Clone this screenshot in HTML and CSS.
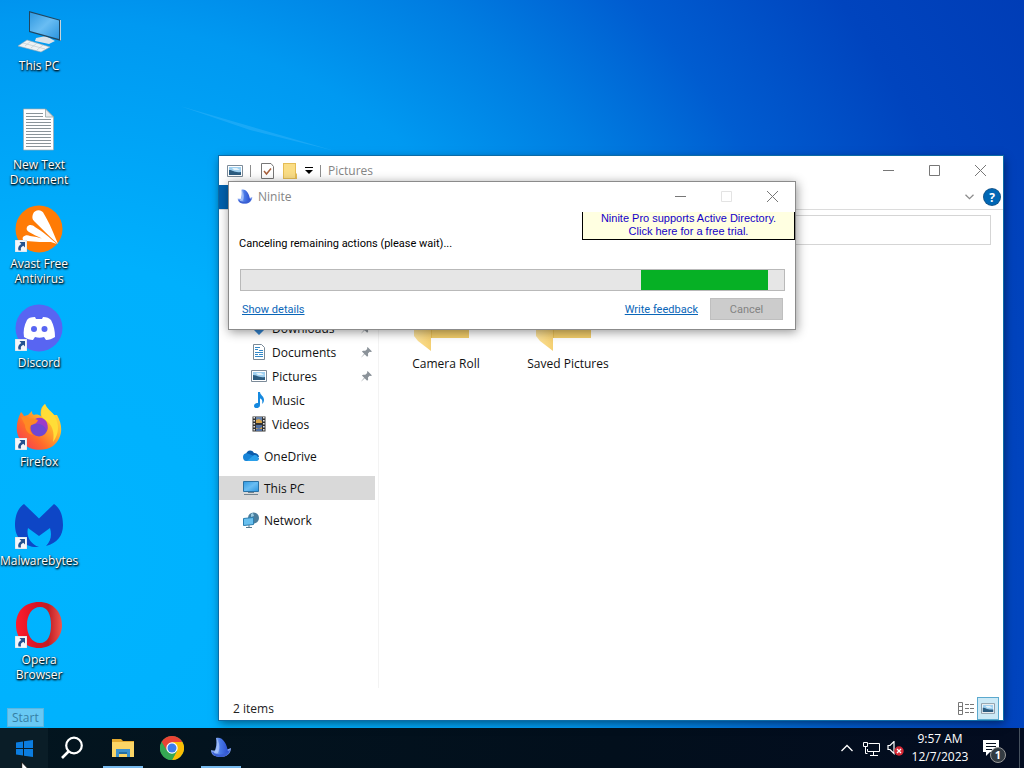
FILE: index.html
```html
<!DOCTYPE html>
<html lang="en">
<head>
<meta charset="utf-8">
<title>Desktop</title>
<link rel="stylesheet" href="styles.css">
</head>
<body>
<svg class="defs" aria-hidden="true">
  <defs>
    <linearGradient id="screen" x1="0" y1="0" x2="1" y2="1"><stop offset="0" stop-color="#2f98e0"/><stop offset=".5" stop-color="#69bdf3"/><stop offset="1" stop-color="#2b95df"/></linearGradient>
    <linearGradient id="fold" x1="0" y1="0" x2="1" y2="0"><stop offset="0" stop-color="#fce29a"/><stop offset="1" stop-color="#f5d072"/></linearGradient>
    <linearGradient id="fox" x1="1" y1="0" x2="0" y2="1"><stop offset="0" stop-color="#fff04a"/><stop offset=".35" stop-color="#ffb52e"/><stop offset=".65" stop-color="#ff6a2b"/><stop offset="1" stop-color="#f22c63"/></linearGradient>
    <linearGradient id="opera" x1="0" y1="0" x2="1" y2="0"><stop offset="0" stop-color="#ff1c2d"/><stop offset=".45" stop-color="#d71425"/><stop offset=".7" stop-color="#c01d24"/><stop offset="1" stop-color="#f1564c"/></linearGradient>
    <linearGradient id="sail" x1="0" y1="0" x2="1" y2="0"><stop offset="0" stop-color="#a9c6fa"/><stop offset=".45" stop-color="#4878e6"/><stop offset="1" stop-color="#2c50cf"/></linearGradient>
    <symbol id="shortcut" viewBox="0 0 12 12"><path fill="#f4f6fa" stroke="#b9c4d0" stroke-width=".5" d="M0 0h12v12H0z"/><path fill="#24518f" d="M4.500 2H10v5.500L8.300 5.800C6 7 5.500 8 6 10.500H3.500C2.500 7.500 3.800 5.500 6.300 3.900z"/></symbol>
    <symbol id="picture" viewBox="0 0 16 12"><path fill="#fff" stroke="#7c8b99" d="M.5.5h15v11H.5z"/><path fill="#9fd0f0" d="M2 2h12v8H2z"/><path fill="#e4f2fa" d="M5 3h5l3 2H7z"/><path fill="#2c5c80" d="M2 5c4 0 5 3 12 2v3H2z"/></symbol>
    <symbol id="pin" viewBox="0 0 12 12"><path fill="#8b9299" d="M7.200 0 12 4.800l-1.400.6-1.200-.3-1.800 1.900.2 2.500-1.100 1L4 7.900.3 11.500 0 12l.5-1L3.500 7.400 1 4.900 2.200 4l2.500.2 2.100-1.900-.2-1.300z"/></symbol>
    <symbol id="ninite" viewBox="0 0 22 22"><path fill="#7f9ff0" d="M1 13c3 1 14 1 20-2 0 6-5 9-10 9-6 0-10-2-10-7z"/><path fill="#3a5fd2" d="M2 15c5 2 13 1 18-2-1 5-5 7-9 7s-8-1-9-5z"/><path fill="url(#sail)" d="M6 1c6-2 11 5 12 14-5 3-10 3-14 1 2-4 3-9 2-15z"/><path fill="#bdd4ff" opacity=".6" d="M7 2c3 5 3 10 1 14l-3-.5C7 11 7.500 7 7 2z"/></symbol>
    <symbol id="folder" viewBox="0 0 96 96"><path fill="#e8bf55" d="M16 18h24l4 6h27v58H22z"/><path fill="#f1cc6a" d="M34 26h37v56H34z"/><path fill="url(#fold)" d="M16 18l17 11v66L20 85l-4-5z"/></symbol>
  </defs>
</svg>
<main class="desktop">
  <svg class="beam" aria-hidden="true"><path d="M180 106 335 151 250 130z"/></svg>
  <nav class="shortcuts" aria-label="Desktop icons">
    <a class="shortcut" href="#pc">
      <svg class="big" viewBox="0 0 48 48"><path fill="#d9e3ea" d="M21 31l10-2 9 5-6 3-14-3z"/><path fill="#eef2f4" stroke="#9aa8b1" stroke-width=".6" d="M12 33l23 7-9 5-23-6z"/><path stroke="#c0cad0" stroke-width=".7" d="M8 36l22 6M16 34l-6 5M22 36l-6 5M28 38l-6 5"/><path fill="#204660" d="M14 4l32 9v21l-32-9z"/><path fill="url(#screen)" d="M15 5.500l29 8v18.500l-29-8z"/><path stroke="#c5d4dc" d="M45.500 13v20.500" fill="none"/></svg>
      <span>This PC</span></a>
    <a class="shortcut" href="#doc">
      <svg class="big" viewBox="0 0 48 48"><path fill="#fff" stroke="#a2a9ad" stroke-width=".7" d="M8.500 3h22l8 8v33h-30z"/><path fill="#e7ebed" stroke="#899" stroke-width=".7" d="M30.500 3v8h8z"/><path stroke="#8b9499" d="M11 7.500h17M11 10.500h17M11 13.500h25M11 16.500h25M11 19.500h25M11 22.500h25M11 25.500h25M11 28.500h25M11 31.500h25M11 34.500h25M11 37.500h25M11 40.500h25"/></svg>
      <span>New Text Document</span></a>
    <a class="shortcut" href="#avast">
      <svg class="big" viewBox="0 0 48 48"><circle cx="24" cy="24" r="23.500" fill="#ff7b05"/><path fill="#fff" d="M18 9c2-5 9-5 11 0 5 8 10 20 14 30C35 32 26 23 19 16c-2-2-2-4-1-7zM12 22c2-3 6-2 8 0 7 4 15 11 22 17-10-3-21-8-28-12-2-1-3-3-2-5zM8 32c2-2 5-2 7-1 9 1 17 4 23 6-9 0-18 0-27-1-3 0-4-2-3-4z"/><use href="#shortcut" x="0" y="35" width="12" height="12"/></svg>
      <span>Avast Free Antivirus</span></a>
    <a class="shortcut" href="#discord">
      <svg class="big" viewBox="0 0 48 48"><circle cx="24" cy="24" r="23.500" fill="#5865f2"/><path fill="#fff" d="M20 13c-4 0-7 1-8 3-3 6-4 11-3 17 3 2 6 3 9 3l2-3c3 1 6 1 9 0l2 3c3 0 6-1 9-3 0-6-1-11-4-17-2-2-4-3-8-3l-1 2h-6z"/><circle cx="19" cy="25" r="3" fill="#5865f2"/><circle cx="29.500" cy="25" r="3" fill="#5865f2"/><use href="#shortcut" x="0" y="35" width="12" height="12"/></svg>
      <span>Discord</span></a>
    <a class="shortcut" href="#firefox">
      <svg class="big" viewBox="0 0 48 48"><path fill="url(#fox)" d="M6 9c1 1 2 2 3 4l4-1 4-4c0 2 0 3 2 4 3-1 5 0 7 1-1-5 0-9 4-12 2 5 5 7 9 11l3 0c7 12 5 24-4 31-9 6-23 5-30-3C-1 31 1 19 6 9z"/><path fill="#ffdd37" d="M30 1c2 5 6 7 9 11 6 9 5 19-1 27 2-10-1-18-8-22-6-4-4-11 0-16z"/><circle cx="24" cy="25" r="8.500" fill="#7047d2"/><path fill="#9b3cc9" d="M20 16c8-4 15 3 12 12-2-5-6-8-12-7z"/><path fill="#ff8a24" d="M6 14c5 0 6 0 9 2 3-1 5 0 8 1-1 4-5 4-8 6-1 3 0 6 3 9-5-1-8-5-8-10z"/><use href="#shortcut" x="0" y="35" width="12" height="12"/></svg>
      <span>Firefox</span></a>
    <a class="shortcut" href="#malwarebytes">
      <svg class="big" viewBox="0 0 48 48"><path fill="#0e46c6" d="M9 2 24 16.500 39 2c7 5 9 13 9 21 0 11-6 18-17 21 5-5 6-11 4-18L24 34 13 26c-2 8 2 16 11 19C9 46 0 36 0 23 0 15 2 7 9 2z"/><use href="#shortcut" x="0" y="35" width="12" height="12"/></svg>
      <span>Malwarebytes</span></a>
    <a class="shortcut" href="#opera">
      <svg class="big" viewBox="0 0 48 48"><path fill="url(#opera)" fill-rule="evenodd" d="M24 1C38 1 47 11 47 24S37 47 24 47 1 38 1 24 10 1 24 1zm1 5C17 6 12 14 12 24s5 18 13 18 11-8 11-18S33 6 25 6z"/><use href="#shortcut" x="0" y="35" width="12" height="12"/></svg>
      <span>Opera Browser</span></a>
  </nav>

  <section class="explorer" aria-label="Pictures">
    <header class="titlebar">
      <svg width="16" height="12"><use href="#picture"/></svg>
      <i class="sep first"></i>
      <svg class="check" width="13" height="16" viewBox="0 0 13 16"><path fill="#fff" stroke="#777" d="M.5.5H10l2.500 3v12H.5z"/><path fill="none" stroke="#a8613d" stroke-width="1.500" d="m3 8 2.500 3L10 5.500"/></svg>
      <svg class="mini" width="14" height="16" viewBox="0 0 14 16"><path fill="#e5bd55" d="M0 0h13v10l1 1v5H0z"/><path fill="#fadd85" d="M1 1h11v14H1z"/></svg>
      <svg width="8" height="7" viewBox="0 0 8 7"><path d="M0 0h8v1H0zM0 3h8L4 7z"/></svg>
      <i class="sep"></i>
      <h1>Pictures</h1>
      <div class="controls">
        <button aria-label="Minimize"><svg viewBox="0 0 11 11"><path d="M0 5.500h11"/></svg></button>
        <button aria-label="Maximize"><svg viewBox="0 0 11 11"><path d="M.5.5h10v10H.5z"/></svg></button>
        <button aria-label="Close"><svg viewBox="0 0 11 11"><path d="m0 0 11 11M11 0 0 11"/></svg></button>
      </div>
    </header>
    <div class="ribbon">
      <button class="file" aria-label="File"></button>
      <button class="expand" aria-label="Expand the ribbon"><svg width="9" height="6" viewBox="0 0 9 6"><path fill="none" stroke="#8c8c8c" stroke-width="1.300" d="m.5.7 4 4 4-4"/></svg></button>
      <button class="help" aria-label="Help">?</button>
    </div>
    <div class="address"><input type="text" aria-label="Search Pictures"></div>
    <div class="panes">
      <nav class="tree" aria-label="Folders">
        <a class="sub" href="#downloads"><svg viewBox="0 0 16 16"><path fill="#3484cf" d="M5 1h6v7h4l-7 7-7-7h4z"/></svg>Downloads<svg class="pin"><use href="#pin"/></svg></a>
        <a class="sub" href="#documents"><svg viewBox="0 0 16 16"><path fill="#fff" stroke="#788997" d="M2.500.5h8l3 3v12h-11z"/><path stroke="#3389c8" d="M4 5.500h3M4 3.500h5M8 6.500h4M4 8.500h8M4 10.500h3M8 10.500h4M4 12.500h8"/></svg>Documents<svg class="pin"><use href="#pin"/></svg></a>
        <a class="sub" href="#pictures"><svg viewBox="0 0 16 16"><use href="#picture" y="2" width="16" height="12"/></svg>Pictures<svg class="pin"><use href="#pin"/></svg></a>
        <a class="sub" href="#music"><svg viewBox="0 0 16 16"><path fill="#1689df" d="M7 0h2c0 3 4 4 4 8 0 2-1 3-2 4 1-4-.5-5-2-5.500V13c0 4-6 4-6 1 0-2 2-3.500 4-3z"/></svg>Music</a>
        <a class="sub" href="#videos"><svg viewBox="0 0 16 16"><path fill="#333" d="M1.500.5h13v15h-13z"/><path fill="#6985ad" d="M5 1h6v6H5z"/><path fill="#5270a0" d="M5 9h6v6H5z"/><path fill="#d8a54a" d="M5 4l3-1 3 2v2H5zM5 12l3 1 3-2v2H5z"/><path stroke="#eee" stroke-width="1.500" stroke-dasharray="1.500 1.500" d="M3.200 1v14M12.800 1v14"/></svg>Videos</a>
        <a class="root" href="#onedrive"><svg viewBox="0 0 16 16"><path fill="#0b5cac" d="M3 7c0-5 6-6 8-2 3 0 5 2 5 4l-6 2z"/><path fill="#1784d8" d="M0 9c0-3 3-5 6-3l10 4c0 2-1 3-3 3H3c-2 0-3-2-3-4z"/><path fill="#2aa0ea" d="M4 13l7-6c4-1 6 5 2 6z"/></svg>OneDrive</a>
        <a class="root current" href="#thispc"><svg viewBox="0 0 16 16"><path fill="url(#screen)" stroke="#2a71a4" d="M.5 1.500h15v10H.5z"/><path stroke="#71838f" d="M1 14.500h14M5 12.500h6"/></svg>This PC</a>
        <a class="root" href="#network"><svg viewBox="0 0 16 16"><circle cx="10.500" cy="6" r="5.500" fill="#4a7d9c"/><path fill="#9acbe2" d="M8 2l2-1 1 3-3 1z"/><path fill="#69c0ef" stroke="#2c7fb1" d="m.5 6.500 10-1v7l-10 1z"/><path stroke="#56798d" d="M3 15.500h6M6 13v2"/></svg>Network</a>
      </nav>
      <div class="files">
        <a href="#camera"><svg width="96" height="96"><use href="#folder"/></svg><span>Camera Roll</span></a>
        <a href="#saved"><svg width="96" height="96"><use href="#folder"/></svg><span>Saved Pictures</span></a>
      </div>
    </div>
    <footer class="status">
      <span>2 items</span>
      <button aria-label="Details view"><svg width="16" height="13" viewBox="0 0 16 13"><path fill="none" stroke="#777" d="M.5.5h4v12h-4zM.5 4.500h4M.5 8.500h4"/><path stroke="#777" stroke-dasharray="4 1" d="M7 2.500h9M7 6.500h9M7 10.500h9"/></svg></button>
      <button class="on" aria-label="Large icons view"><svg width="14" height="11"><use href="#picture"/></svg></button>
    </footer>
  </section>

  <section class="dialog" role="dialog" aria-label="Ninite">
    <header class="titlebar">
      <svg width="16" height="16"><use href="#ninite"/></svg>
      <h2>Ninite</h2>
      <div class="controls">
        <button aria-label="Minimize"><svg viewBox="0 0 11 11"><path d="M0 5.500h11"/></svg></button>
        <button aria-label="Maximize" disabled><svg viewBox="0 0 11 11"><path d="M.5.5h10v10H.5z"/></svg></button>
        <button aria-label="Close"><svg viewBox="0 0 11 11"><path d="m0 0 11 11M11 0 0 11"/></svg></button>
      </div>
    </header>
    <div class="message">
      <p id="job">Canceling remaining actions (please wait)...</p>
      <a href="#pro">Ninite Pro supports Active Directory.<br>Click here for a free trial.</a>
    </div>
    <div class="progress" role="progressbar" aria-labelledby="job"><div class="chunk"></div></div>
    <div class="actions">
      <a href="#details">Show details</a>
      <a class="feedback" href="#feedback">Write feedback</a>
      <button disabled>Cancel</button>
    </div>
  </section>
  <div class="tooltip" role="tooltip">Start</div>
</main>

<footer class="taskbar">
  <button class="start" aria-label="Start"><svg width="17" height="17" viewBox="0 0 17 17"><path fill="#0b7de0" d="m0 2.500 7-1V8H0zM8 1.300 17 0v8H8zM0 9h7v6.500l-7-1zM8 9h9v8l-9-1.300z"/></svg></button>
  <button aria-label="Search"><svg width="24" height="24" viewBox="0 0 24 24"><circle cx="14" cy="9.500" r="7.800" fill="none" stroke="#fff" stroke-width="2.200"/><path stroke="#fff" stroke-width="2.600" d="m9 15-7 7"/></svg></button>
  <div class="apps">
    <button class="open" aria-label="File Explorer"><svg width="22" height="18" viewBox="0 0 22 18"><path fill="#e3a92f" d="M0 0h9l2 2h11v16H0z"/><path fill="#fbd566" d="M0 3h22v15H0z"/><path fill="#3d91cd" d="M4 10h14v8h-3v-4H7v4H4z"/><path fill="#256fa4" d="M7 13h8v2H7z"/></svg></button>
    <button aria-label="Google Chrome"><svg width="24" height="24" viewBox="0 0 24 24"><circle cx="12" cy="12" r="12" fill="#35a853"/><path fill="#e94335" d="M1.600 6A12 12 0 0 1 22.400 6L12 7 7 15z"/><path fill="#fbbd05" d="M22.400 6A12 12 0 0 1 12 24l5-9-5-9z"/><path fill="#35a853" d="M1.600 6A12 12 0 0 0 12 24l4.800-9H7z"/><circle cx="12" cy="12" r="5.700" fill="#fff"/><circle cx="12" cy="12" r="4.500" fill="#3b7ded"/></svg></button>
    <button class="open" aria-label="Ninite"><svg width="22" height="22"><use href="#ninite"/></svg></button>
  </div>
  <div class="tray">
    <button aria-label="Show hidden icons"><svg width="12" height="8" viewBox="0 0 12 8"><path fill="none" stroke="#fff" stroke-width="1.300" d="m.5 7 5.500-5.500L11.500 7"/></svg></button>
    <button aria-label="Network"><svg width="17" height="15" viewBox="0 0 17 15"><path fill="none" stroke="#fff" d="M5.500 2.500h11v8h-12V8M10.500 11v3M7 14.500h8M.5 1.500h4v4h-4zM2.500 6v6.500h2"/></svg></button>
    <button aria-label="Volume muted"><svg width="17" height="15" viewBox="0 0 17 15"><path fill="none" stroke="#fff" stroke-width="1.200" d="M1 4.500h2l4-4v12l-4-4H1z"/><circle cx="12" cy="10" r="4.700" fill="#d62835"/><path stroke="#fff" stroke-width="1.300" d="m10 8 4 4m0-4-4 4"/></svg></button>
    <time datetime="2023-12-07T09:57">9:57 AM<br>12/7/2023</time>
    <button class="notes" aria-label="Notifications"><svg width="16" height="16" viewBox="0 0 16 16"><path fill="#fff" d="M0 0h16v12H7l-4 4v-4H0z"/><path stroke="#07101f" d="M3 3.500h10M3 6.500h10M3 9.500h6"/></svg><b>1</b></button>
    <i class="peek"></i>
  </div>
</footer>
<svg class="cursor" width="14" height="20" viewBox="0 0 14 20" aria-hidden="true"><path fill="#fff" stroke="#111" d="M.7 1v16l4-3.500 2.500 6 2.500-1-2.500-5.500h5z"/></svg>
</body>
</html>
```
FILE: styles.css
```css
* { box-sizing: border-box; }
body {
  margin: 0;
  height: 100vh;
  display: flex;
  flex-direction: column;
  overflow: hidden;
  font: 12px/15px "Open Sans", "Noto Sans", sans-serif;
  color: #111;
}
a { color: inherit; text-decoration: none; }
button { border: 0; padding: 0; background: none; font: inherit; color: inherit; }
h1, h2, p { margin: 0; font: inherit; }
svg { display: block; flex: none; }
.defs { position: absolute; width: 0; height: 0; }

.desktop {
  flex: 1;
  position: relative;
  min-height: 0;
  background: radial-gradient(circle at 60px 560px, #00b4ff 0, #00b0fd 300px, #0099f1 540px, #007de1 670px, #005cd0 800px, #0044be 960px, #0039b2 1200px);
}
.beam { position: absolute; width: 340px; height: 155px; fill: #7fd0ff; opacity: .2; }

.shortcuts { display: grid; grid-auto-rows: 99px; width: 78px; padding-top: 7px; }
.shortcut {
  display: flex;
  flex-direction: column;
  align-items: center;
  gap: 3px;
  color: #fff;
  text-align: center;
  text-shadow: 0 1px 2px #000, 1px 1px 2px #000;
}
.big { width: 48px; height: 48px; }

.explorer {
  position: absolute;
  left: 219px;
  top: 156px;
  right: 21px;
  bottom: 8px;
  display: flex;
  flex-direction: column;
  background: #fff;
  box-shadow: 0 0 0 1px #0c6ba6, 1px 3px 9px rgba(0, 0, 0, .5);
}
.titlebar { display: flex; align-items: center; height: 29px; padding-left: 8px; color: #858585; flex: none; }
.sep { width: 1px; height: 12px; background: #8d8d8d; margin: 0 7px; }
.sep.first { margin-right: 10px; }
.mini { margin: 0 8px 0 9px; }
.controls { display: flex; margin-left: auto; }
.controls button { width: 46px; height: 29px; display: grid; place-items: center; }
.controls svg { width: 11px; height: 11px; fill: none; stroke: #777; }
.controls button:disabled { opacity: .2; }
.ribbon { display: flex; align-items: center; height: 25px; border-bottom: 1px solid #dcdcdc; flex: none; padding-right: 3px; }
.file { width: 56px; height: 24px; background: #0061ae; }
.expand { margin-left: auto; margin-right: 10px; }
.help { width: 16px; height: 16px; border-radius: 50%; background: #0067b5; color: #fff; font-weight: 700; box-shadow: 0 0 0 1px #17568a; }
.address { padding: 5px 12px 5px 450px; flex: none; }
.address input { display: block; width: 100%; height: 30px; border: 1px solid #d5d5d5; outline: 0; }
.panes { flex: 1; display: flex; min-height: 0; }
.tree { width: 160px; border-right: 1px solid #f3f3f3; padding: 66px 3px 0 0; margin-bottom: 8px; }
.tree a { display: flex; align-items: center; gap: 5px; height: 24px; padding: 0 3px 0 0; }
.tree svg { width: 16px; height: 16px; }
.tree a.sub { padding-left: 32px; }
.tree a.root { padding-left: 24px; margin-top: 8px; }
.tree .current { background: #d9d9d9; }
.tree .pin { width: 11px; height: 11px; margin-left: auto; }
.files { display: flex; padding: 6px 0 0 6px; }
.files a { width: 122px; display: flex; flex-direction: column; align-items: center; gap: 4px; }
.status { display: flex; align-items: center; height: 24px; padding: 0 4px 0 14px; flex: none; color: #222; }
.status span { margin-right: auto; }
.status button { width: 22px; height: 23px; display: grid; place-items: center; }
.status .on { background: #cce9f6; border: 1px solid #5ba9ce; }

.dialog {
  position: absolute;
  left: 228px;
  top: 181px;
  width: 568px;
  background: #fff;
  border: 1px solid #8b8b8b;
  box-shadow: 1px 2px 10px rgba(0, 0, 0, .42);
  font: 11px/13px Roboto, "Open Sans", sans-serif;
}
.dialog .titlebar { margin-bottom: 1px; }
.dialog h2 { margin-left: 5px; font: 12px/15px "Open Sans", sans-serif; }
.message { display: flex; justify-content: space-between; align-items: flex-start; padding-left: 10px; }
.message p { padding-top: 25px; color: #000; }
.message a {
  width: 213px;
  height: 28px;
  border: solid #000;
  border-width: 0 1px 1px;
  background: #ffffe1;
  color: #1400c8;
  text-align: center;
  font: 11px/13px "Liberation Sans", Arial, sans-serif;
}
.progress { height: 22px; margin: 19px 10px 0 11px; border: 1px solid #b9b9b9; background: #e6e6e6; }
.chunk { height: 100%; width: 23.4%; margin-left: 73.6%; background: #06b025; }
.actions { display: flex; align-items: center; padding: 7px 12px 9px 13px; color: #0a66b8; }
.actions a { text-decoration: underline; }
.feedback { margin: 0 12px 0 auto; }
.actions button { width: 73px; height: 22px; border: 1px solid #bfbfbf; background: #ccc; color: #838383; }

.tooltip {
  position: absolute;
  left: 7px;
  bottom: 1px;
  padding: 1px 4px;
  background: #69c9f4;
  border: 1px solid #5bb5df;
  color: #357fa5;
}

.taskbar { display: flex; height: 40px; flex: none; background: linear-gradient(90deg, #03151f, #020f1c 60%, #030c20); color: #fff; }
.taskbar button { display: grid; place-items: center; width: 48px; height: 40px; }
.taskbar .start { background: #0a1d27; }
.apps { display: flex; gap: 1px; margin-left: 3px; }
.apps .open { background: linear-gradient(#76b9ed, #76b9ed) bottom / 40px 2px no-repeat; }
.tray { display: flex; align-items: center; margin-left: auto; }
.taskbar .tray button { width: 24px; }
.tray time { width: 66px; text-align: center; line-height: 18px; }
.taskbar .tray .notes { position: relative; width: 46px; padding-right: 10px; }
.notes b {
  position: absolute;
  left: 17px;
  top: 19px;
  width: 16px;
  height: 16px;
  border-radius: 50%;
  border: 1px solid #999;
  background: #333b42;
  font: 700 11px/14px "Open Sans", sans-serif;
}
.peek { width: 5px; height: 40px; border-left: 1px solid #46515e; }
.cursor { position: absolute; left: 21px; bottom: -13px; }
```
